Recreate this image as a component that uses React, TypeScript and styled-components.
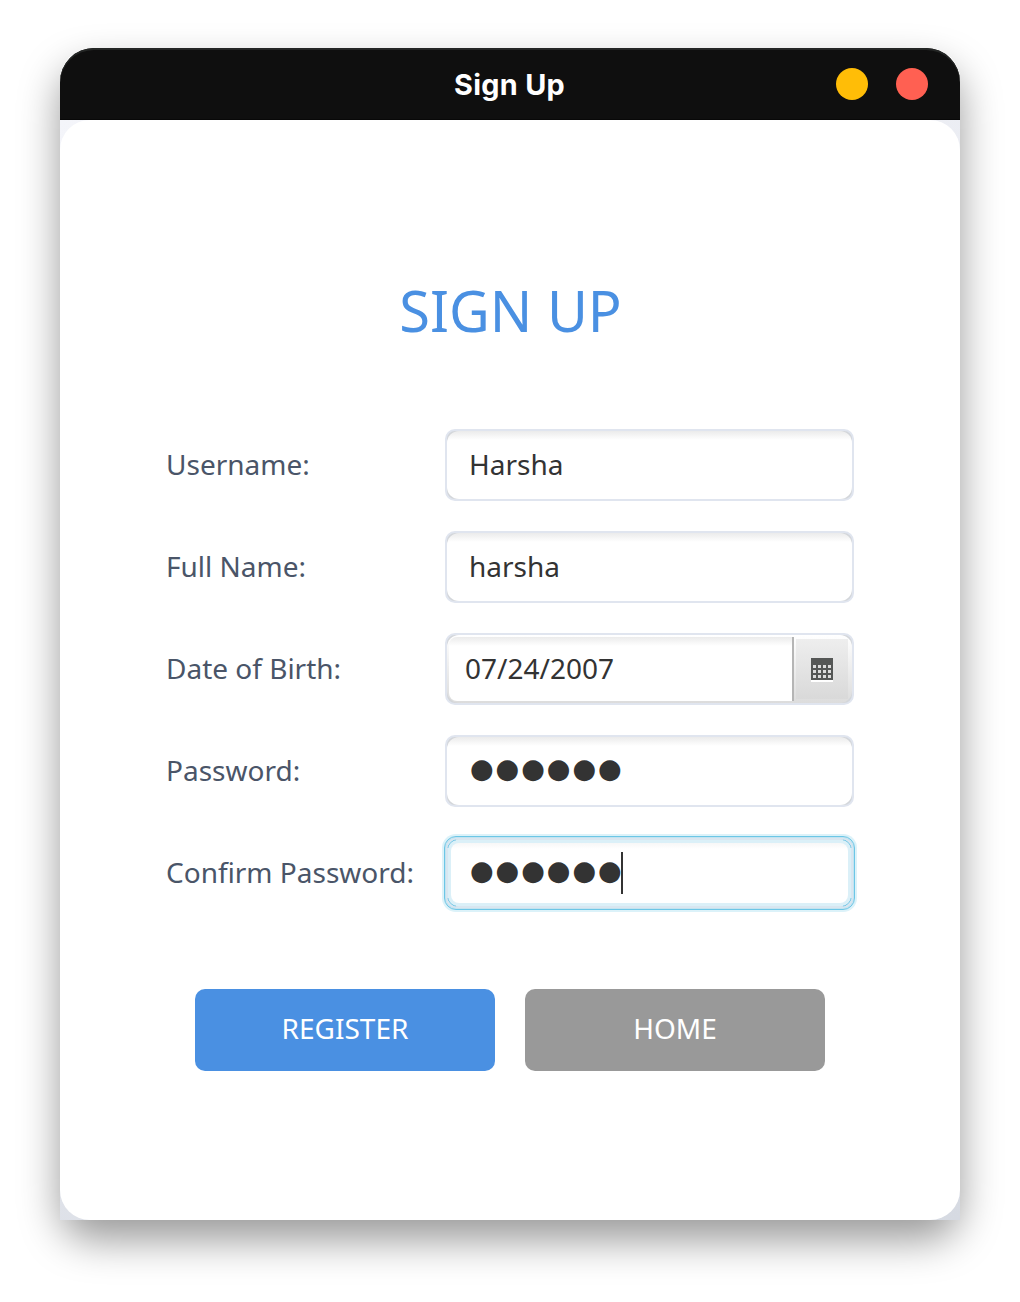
import React from "react";
import styled, { createGlobalStyle, css } from "styled-components";

const GlobalStyle = createGlobalStyle`
  * { box-sizing: border-box; }
  body { margin: 0; background: #fff; }
`;

const Stage = styled.main`
  width: 1020px;
  height: 1302px;
  padding: 48px 60px 82px;
  overflow: hidden;
  font-family: "Noto Sans", sans-serif;
  font-size: 28px;
`;

const Window = styled.div`
  display: flex;
  flex-direction: column;
  height: 1172px;
  border-radius: 32px;
  box-shadow: 0 20px 40px rgba(0, 0, 0, 0.4);
`;

const TitleBar = styled.header`
  display: grid;
  grid-template-columns: 1fr auto 1fr;
  align-items: center;
  flex: none;
  height: 72px;
  padding: 0 32px;
  border-radius: 34px 34px 0 0;
  background: #0f0f0f;
  box-shadow: inset 0 2px 0 #242625, inset 0 -1px 0 #080808;
`;

const WindowTitle = styled.div`
  grid-column: 2;
  padding: 1px 1px 0 0;
  color: #fff;
  font: 700 28.8px/36px Inter, sans-serif;
  letter-spacing: 0.3px;
`;

const WindowButtons = styled.div`
  display: flex;
  justify-content: flex-end;
  gap: 28px;
`;

const Dot = styled.span<{ $color: string }>`
  width: 32px;
  height: 32px;
  border-radius: 50%;
  background: ${(p) => p.$color};
`;

const Backdrop = styled.div`
  flex: 1;
  background: linear-gradient(155deg, #f4f5fa, #d6dae2);
`;

const Card = styled.section`
  display: flex;
  flex-direction: column;
  align-items: center;
  height: 100%;
  padding-top: 152px;
  border-radius: 30px;
  background: #fff;
`;

const Heading = styled.h1`
  margin: 0;
  padding-left: 1px;
  color: #4a90e2;
  font-size: 56px;
  font-weight: 400;
  line-height: 76px;
`;

const Form = styled.div`
  display: grid;
  grid-template-columns: 249px 409px;
  grid-auto-rows: 72px;
  column-gap: 30px;
  row-gap: 30px;
  align-items: center;
  margin: 81px 0 80px;
`;

const Label = styled.label`
  padding-bottom: 2px;
  color: #4a5568;
  line-height: 38px;
  white-space: nowrap;
`;

const Field = styled.div<{ $focused?: boolean }>`
  position: relative;
  isolation: isolate;
  display: flex;
  align-items: center;
  height: 72px;
  padding: 0 22px 2px;
  border: 2px solid #e0e5ef;
  border-radius: 10px;
  background: #d3d6da;
  color: #333;

  &::before {
    content: "";
    position: absolute;
    z-index: -1;
    inset: 0;
    border-radius: 12px;
    background: linear-gradient(#ebebeb, #fff 9px);
  }

  ${(p) =>
    p.$focused &&
    css`
      height: 74px;
      margin: 0 -1px;
      padding: 0 24px 2px;
      border: 1px solid #6cc6e6;
      border-radius: 12px;
      background: #dbf0f8;
      box-shadow: 0 0 0 2px #dcf2f9, inset 0 0 0 1px #c3e3f0, inset 0 0 0 3px #d9e6f0;

      &::before {
        inset: 6px;
        border-radius: 8px;
        background: linear-gradient(#f7f7f7, #fff 6px);
      }

      &::after {
        content: "";
        position: absolute;
        inset: 2px;
        border: 1px solid #6fc4e4;
        border-radius: 11px;
        mask: linear-gradient(90deg, #000 9px, transparent 9px calc(100% - 9px), #000 0),
          linear-gradient(#000 9px, transparent 9px calc(100% - 9px), #000 0);
        mask-composite: intersect;
      }
    `}
`;

const Bullets = styled.span`
  padding: 0 0 2px 1px;
  font: 27.3px/40px "DejaVu Sans", sans-serif;
  letter-spacing: 1.8px;
`;

const Caret = styled.span`
  width: 2px;
  height: 42px;
  margin: 1px 0 0 -2.4px;
  background: #333;
`;

const DateField = styled(Field)`
  padding: 0;

  &::before {
    border-radius: 12px;
    background: linear-gradient(#fff, #dcdcdc);
  }
`;

const DateText = styled.div`
  flex: 1;
  height: 64px;
  padding-left: 16px;
  margin-left: 2px;
  border-right: 2px solid #b5b5b5;
  border-radius: 8px 0 0 8px;
  background: linear-gradient(#ebebeb, #fff 9px);
  line-height: 62px;
`;

const DateButton = styled.div`
  display: flex;
  align-items: center;
  justify-content: center;
  width: 52px;
  height: 60px;
  padding-top: 2px;
  margin: 0 4px 0 2px;
  background: linear-gradient(#eeeeee, #d9d9d9);
`;

const Actions = styled.div`
  display: flex;
  gap: 30px;
`;

const ActionButton = styled.button<{ $color: string }>`
  width: 300px;
  height: 82px;
  padding: 0 0 4px;
  border: 0;
  border-radius: 10px;
  background: ${(p) => p.$color};
  color: #fff;
  font: 400 28px/38px "Noto Sans", sans-serif;
`;

function CalendarIcon() {
  return (
    <svg width="22" height="24" viewBox="0 0 22 24">
      <path fill="#fff" d="M0 22h22v2H0z" />
      <path fill="#555756" d="M0 0h22v22H0z" />
      {[7, 12, 17].map((y) =>
        [2, 7, 12, 17].map((x) => (
          <rect key={`${x}-${y}`} x={x} y={y} width="3" height="3" fill="#dcdcdc" />
        ))
      )}
    </svg>
  );
}

export default function App() {
  return (
    <Stage>
      <GlobalStyle />
      <Window>
        <TitleBar>
          <WindowTitle>Sign Up</WindowTitle>
          <WindowButtons>
            <Dot $color="#ffbd07" />
            <Dot $color="#ff6052" />
          </WindowButtons>
        </TitleBar>
        <Backdrop>
          <Card>
            <Heading>SIGN UP</Heading>
            <Form>
              <Label>Username:</Label>
              <Field>Harsha</Field>
              <Label>Full Name:</Label>
              <Field>harsha</Field>
              <Label>Date of Birth:</Label>
              <DateField>
                <DateText>07/24/2007</DateText>
                <DateButton>
                  <CalendarIcon />
                </DateButton>
              </DateField>
              <Label>Password:</Label>
              <Field>
                <Bullets>●●●●●●</Bullets>
              </Field>
              <Label>Confirm Password:</Label>
              <Field $focused>
                <Bullets>●●●●●●</Bullets>
                <Caret />
              </Field>
            </Form>
            <Actions>
              <ActionButton $color="#4a90e2">REGISTER</ActionButton>
              <ActionButton $color="#999999">HOME</ActionButton>
            </Actions>
          </Card>
        </Backdrop>
      </Window>
    </Stage>
  );
}
